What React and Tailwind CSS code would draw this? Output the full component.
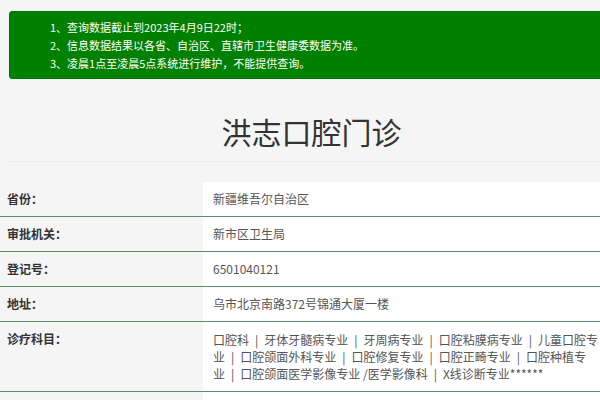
import React from 'react'

const notices = [
  "1、查询数据截止到2023年4月9日22时；",
  "2、信息数据结果以各省、自治区、直辖市卫生健康委数据为准。",
  "3、凌晨1点至凌晨5点系统进行维护，不能提供查询。",
]

// wrapped the way the source page wraps them
const specialtyLines = [
  ["口腔科", "牙体牙髓病专业", "牙周病专业", "口腔粘膜病专业", "儿童口腔专"],
  ["业", "口腔颌面外科专业", "口腔修复专业", "口腔正畸专业", "口腔种植专"],
  ["业", "口腔颌面医学影像专业 /医学影像科", "X线诊断专业******"],
]

const rows = [
  { label: "省份：", value: "新疆维吾尔自治区" },
  { label: "审批机关：", value: "新市区卫生局" },
  { label: "登记号：", value: "6501040121" },
  { label: "地址：", value: "乌市北京南路372号锦通大厦一楼" },
]

export default function App() {
  return (
    <div className="w-full min-h-screen overflow-hidden bg-[#f5f5f5] font-['Noto_Sans_CJK_SC',sans-serif]">
      <div className="w-[614px]">
        <div className="mx-[9px] mt-[11px] rounded-[3px] border border-[#007200] bg-[#008000] py-[6px] pl-[40px] text-[11px] leading-[18px] text-white">
          {notices.map((n) => (
            <p key={n}>{n}</p>
          ))}
        </div>

        <h1 className="ml-[9px] border-b border-[#ebebeb] pt-[36px] pb-[13px] text-center text-[30px] leading-[33px] text-[#333]">
          洪志口腔门诊
        </h1>

        <div className="mt-[20px]">
          {rows.map((r) => (
            <div key={r.label} className="flex border-b border-[#5a8f69]">
              <div className="w-[203px] shrink-0 py-2 pl-[7px] text-[12px] font-bold leading-[18px] text-[#333]">
                {r.label}
              </div>
              <div className="flex-1 bg-white py-2 pl-[10px] text-[12px] leading-[18px] text-[#555]">
                {r.value}
              </div>
            </div>
          ))}
          <div className="flex border-b border-[#5a8f69]">
            <div className="w-[203px] shrink-0 py-2 pl-[7px] text-[12px] font-bold leading-[18px] text-[#333]">
              诊疗科目：
            </div>
            <div className="flex-1 bg-white py-[9px] pl-[10px] text-[12px] leading-[17px] text-[#555]">
              {specialtyLines.map((line, li) => (
                <p key={li} className="whitespace-nowrap">
                  {line.map((s, i) => (
                    <React.Fragment key={s}>
                      {i > 0 && <span className="mx-[6px]">|</span>}
                      {s}
                    </React.Fragment>
                  ))}
                </p>
              ))}
            </div>
          </div>
          <div className="flex">
            <div className="w-[203px] shrink-0 h-[40px]"></div>
            <div className="flex-1 bg-white h-[40px]"></div>
          </div>
        </div>
      </div>
    </div>
  )
}
